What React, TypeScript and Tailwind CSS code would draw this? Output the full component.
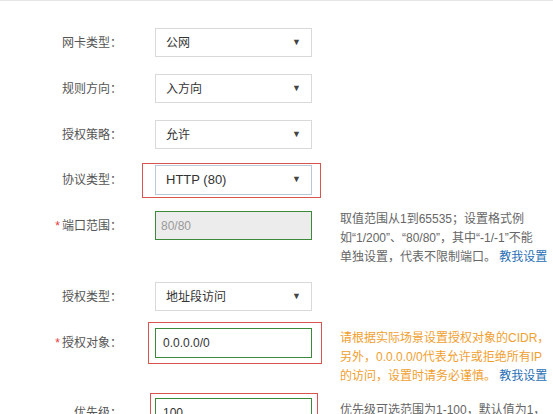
import React from "react";

const font = { fontFamily: '"Liberation Sans", "Noto Sans CJK SC", sans-serif' };

function Arrow() {
  return <span className="text-[9px] text-[#444]">▼</span>;
}

function Row({ label, req, children, mt, help }: { label: string; req?: boolean; children: React.ReactNode; mt: string; help?: React.ReactNode }) {
  return (
    <div className={`flex items-start h-[29px] ${mt}`}>
      <div className="w-[125px] h-[29px] flex items-center justify-end pr-[3px] text-[12px] text-[#555]">
        {req && <span className="text-[#e4393c] mr-[2px]">*</span>}
        {label}：
      </div>
      <div className="ml-[30px] relative">{children}</div>
      {help && <div className="ml-[28px] text-[12px] leading-[19px] whitespace-nowrap">{help}</div>}
    </div>
  );
}

function Select({ v }: { v: string }) {
  return (
    <div className="w-[157px] h-[29px] border border-[#d9d9d9] bg-white flex items-center justify-between px-[10px] text-[12px] text-[#333]">
      <span>{v}</span>
      <Arrow />
    </div>
  );
}

export default function App() {
  return (
    <div className="w-[553px] h-[414px] bg-white overflow-hidden relative border-t border-[#e5e5e5]" style={font}>
      <Row label="网卡类型" mt="mt-[27px]"><Select v="公网" /></Row>
      <Row label="规则方向" mt="mt-[17px]"><Select v="入方向" /></Row>
      <Row label="授权策略" mt="mt-[17px]"><Select v="允许" /></Row>
      <Row label="协议类型" mt="mt-[16px]">
        <div className="absolute left-[-13px] top-[-2px] w-[179px] h-[35px] border border-[#d9534f]" />
        <div className="w-[157px] h-[30px] border border-[#b8c8d8] bg-white flex items-center justify-between px-[10px] text-[13px] text-[#333]">
          <span>HTTP (80)</span>
          <Arrow />
        </div>
      </Row>
      <Row label="端口范围" req mt="mt-[17px]" help={
        <div className="-mt-[1px] text-[#666]">取值范围从1到65535；设置格式例<br />如“1/200”、“80/80”，其中“-1/-1”不能<br />单独设置，代表不限制端口。 <span className="text-[#2a6fb5]">教我设置</span></div>
      }>
        <div className="w-[157px] h-[29px] border border-[#3a8a3a] bg-[#ececec] flex items-center px-[5px] text-[12px] text-[#999]">80/80</div>
      </Row>
      <Row label="授权类型" mt="mt-[42px]"><Select v="地址段访问" /></Row>
      <Row label="授权对象" req mt="mt-[17px]" help={
        <div className="mt-[1px] text-[#f0a030]">请根据实际场景设置授权对象的CIDR，<br />另外，0.0.0.0/0代表允许或拒绝所有IP<br />的访问，设置时请务必谨慎。 <span className="text-[#2a6fb5]">教我设置</span></div>
      }>
        <div className="absolute left-[-7px] top-[-6px] w-[174px] h-[42px] border border-[#d9534f]" />
        <div className="w-[157px] h-[30px] border border-[#3a8a3a] bg-white flex items-center px-[7px] text-[12px] text-[#333]">0.0.0.0/0</div>
      </Row>
      <Row label="优先级" mt="mt-[41px]" help={
        <div className="mt-[3px] text-[#666]">优先级可选范围为1-100，默认值为1，</div>
      }>
        <div className="absolute left-[-5px] top-[-5px] w-[168px] h-[42px] border border-[#d9534f]" />
        <div className="w-[157px] h-[30px] border border-[#3a8a3a] bg-white flex items-center px-[7px] text-[12px] text-[#333]">100</div>
      </Row>
    </div>
  );
}
